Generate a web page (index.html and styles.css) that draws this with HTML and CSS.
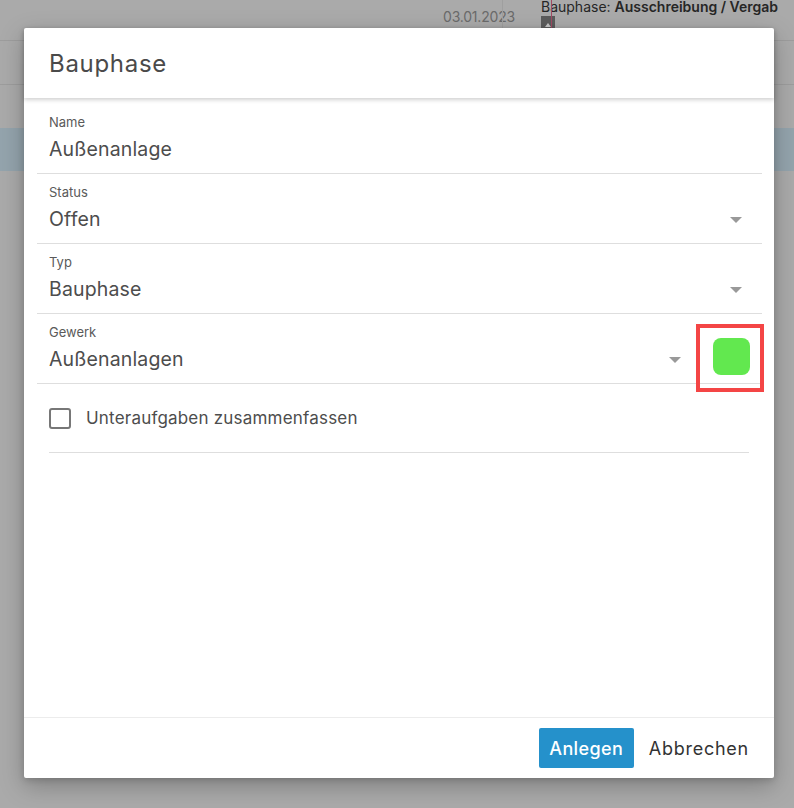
FILE: index.html
```html
<!DOCTYPE html>
<html lang="de">
<head>
<meta charset="utf-8">
<title>Bauphase</title>
<link rel="stylesheet" href="styles.css">
</head>
<body>
<div class="page">
  <div class="bg-row bg-row1">
    <div class="bg-date">03.01.2023</div>
    <div class="bg-sep"></div>
    <div class="bg-phase">
      <div class="bg-phase-text">Bauphase: <b>Ausschreibung / Vergab</b></div>
      <div class="bg-marker"><span class="bg-marker-tip"></span></div>
      <div class="bg-today"></div>
    </div>
  </div>
  <div class="bg-row bg-row2"></div>
  <div class="bg-row bg-row3"></div>
  <div class="bg-band"></div>
</div>

<div class="dialog">
  <div class="dlg-header">Bauphase</div>
  <div class="dlg-body">
    <div class="fields">
      <div class="field">
        <div class="field-label">Name</div>
        <div class="field-value">Außenanlage</div>
      </div>
      <div class="field field-select">
        <div class="field-main">
          <div class="field-label">Status</div>
          <div class="field-value">Offen</div>
          <span class="arrow"></span>
        </div>
      </div>
      <div class="field field-select">
        <div class="field-main">
          <div class="field-label">Typ</div>
          <div class="field-value">Bauphase</div>
          <span class="arrow"></span>
        </div>
      </div>
      <div class="field field-select field-gewerk">
        <div class="field-main">
          <div class="field-label">Gewerk</div>
          <div class="field-value">Außenanlagen</div>
          <span class="arrow"></span>
        </div>
        <div class="swatch"></div>
        <div class="highlight"></div>
      </div>
    </div>
    <div class="check-row">
      <span class="checkbox"></span>
      <span class="check-label">Unteraufgaben zusammenfassen</span>
    </div>
  </div>
  <div class="dlg-footer">
    <button class="btn btn-primary">Anlegen</button>
    <button class="btn btn-text">Abbrechen</button>
  </div>
</div>
</body>
</html>
```
FILE: styles.css
```css
* { box-sizing: border-box; }
html, body { margin: 0; padding: 0; }
body {
  width: 794px;
  height: 808px;
  overflow: hidden;
  background: #aaaaaa;
  font-family: Inter, "Noto Sans", "Liberation Sans", sans-serif;
  position: relative;
}

/* background page (dimmed) */
.page { width: 794px; }
.bg-row { border-bottom: 1px solid #9d9d9d; }
.bg-row1 {
  height: 41px;
  display: flex;
  align-items: flex-start;
}
.bg-date {
  width: 502px;
  padding-top: 8px;
  padding-left: 443px;
  font-size: 14px;
  color: #6b6b6b;
  letter-spacing: -0.2px;
}
.bg-sep {
  width: 1px;
  height: 40px;
  background: #9f9f9f;
}
.bg-phase {
  position: relative;
  margin-left: 38px;
  flex: 1;
  height: 40px;
  overflow: hidden;
}
.bg-phase-text {
  font-size: 14px;
  color: #262626;
  white-space: nowrap;
  line-height: 14px;
}
.bg-phase-text b { font-weight: 600; }
.bg-marker {
  width: 14px;
  height: 12px;
  margin-top: 2px;
  background: #5c5c5c;
  display: flex;
  justify-content: center;
  align-items: flex-end;
}
.bg-marker-tip {
  width: 0;
  height: 0;
  border-left: 3px solid transparent;
  border-right: 3px solid transparent;
  border-bottom: 4px solid #c8c8c8;
  margin-bottom: 1px;
}
.bg-today {
  position: absolute;
  left: 10px;
  top: 0;
  width: 1px;
  height: 30px;
  background: #a04a63;
}
.bg-row2 { height: 44px; }
.bg-row3 { height: 43px; border-bottom: none; }
.bg-band { height: 43px; background: #94a4ad; }

/* dialog */
.dialog {
  position: absolute;
  left: 24px;
  top: 28px;
  width: 750px;
  height: 750px;
  background: #fff;
  border-radius: 2px;
  box-shadow: 0 8px 24px rgba(0,0,0,0.25), 0 2px 6px rgba(0,0,0,0.15);
  display: flex;
  flex-direction: column;
}
.dlg-header {
  height: 70px;
  padding: 21px 25px 0;
  font-size: 24px;
  line-height: 30px;
  color: #4a4a4a;
  letter-spacing: 0.7px;
  box-shadow: 0 2px 4px rgba(0,0,0,0.18);
  position: relative;
  z-index: 1;
}
.dlg-body {
  flex: 1;
  padding-top: 6px;
}
.fields { padding: 0 12px 0 13px; }
.field {
  height: 70px;
  border-bottom: 1px solid #dedede;
  padding: 10px 0 0 12px;
  position: relative;
}
.field-select { display: flex; padding-left: 0; }
.field-main {
  flex: 1;
  position: relative;
  padding-left: 12px;
}
.field-label {
  font-size: 13px;
  line-height: 16px;
  color: #5a5a5a;
}
.field-value {
  margin-top: 6px;
  font-size: 19.5px;
  line-height: 26px;
  color: #4d4d4d;
  letter-spacing: 0.15px;
}
.arrow {
  position: absolute;
  right: 20px;
  top: 33px;
  width: 0;
  height: 0;
  border-left: 6px solid transparent;
  border-right: 6px solid transparent;
  border-top: 6px solid #999;
}
.field-gewerk .field-main { margin-right: 12px; }
.swatch {
  width: 37px;
  height: 37px;
  margin-top: 14px;
  margin-right: 12px;
  background: #62e84f;
  border-radius: 8px;
}
.highlight {
  position: absolute;
  right: -2px;
  top: 10px;
  width: 68px;
  height: 68px;
  border: 4px solid #f44545;
}

.check-row {
  margin: 0 25px;
  height: 69px;
  border-bottom: 1px solid #dedede;
  display: flex;
  align-items: center;
  gap: 15px;
}
.checkbox {
  width: 22px;
  height: 21px;
  border: 2px solid #777;
  border-radius: 3px;
}
.check-label {
  font-size: 17px;
  color: #4d4d4d;
  letter-spacing: 0.2px;
}

.dlg-footer {
  height: 61px;
  border-top: 1px solid #ececec;
  display: flex;
  justify-content: flex-end;
  align-items: center;
  padding-right: 25px;
  gap: 15px;
}
.btn {
  font-family: Inter, "Noto Sans", "Liberation Sans", sans-serif;
  font-size: 18px;
  border: none;
  background: none;
  padding: 0;
  cursor: pointer;
}
.btn-primary {
  width: 95px;
  height: 40px;
  background: #2591cb;
  color: #fff;
  border-radius: 2px;
  font-weight: 500;
  letter-spacing: 0.4px;
}
.btn-text {
  color: #333;
  letter-spacing: 0.75px;
}
```
